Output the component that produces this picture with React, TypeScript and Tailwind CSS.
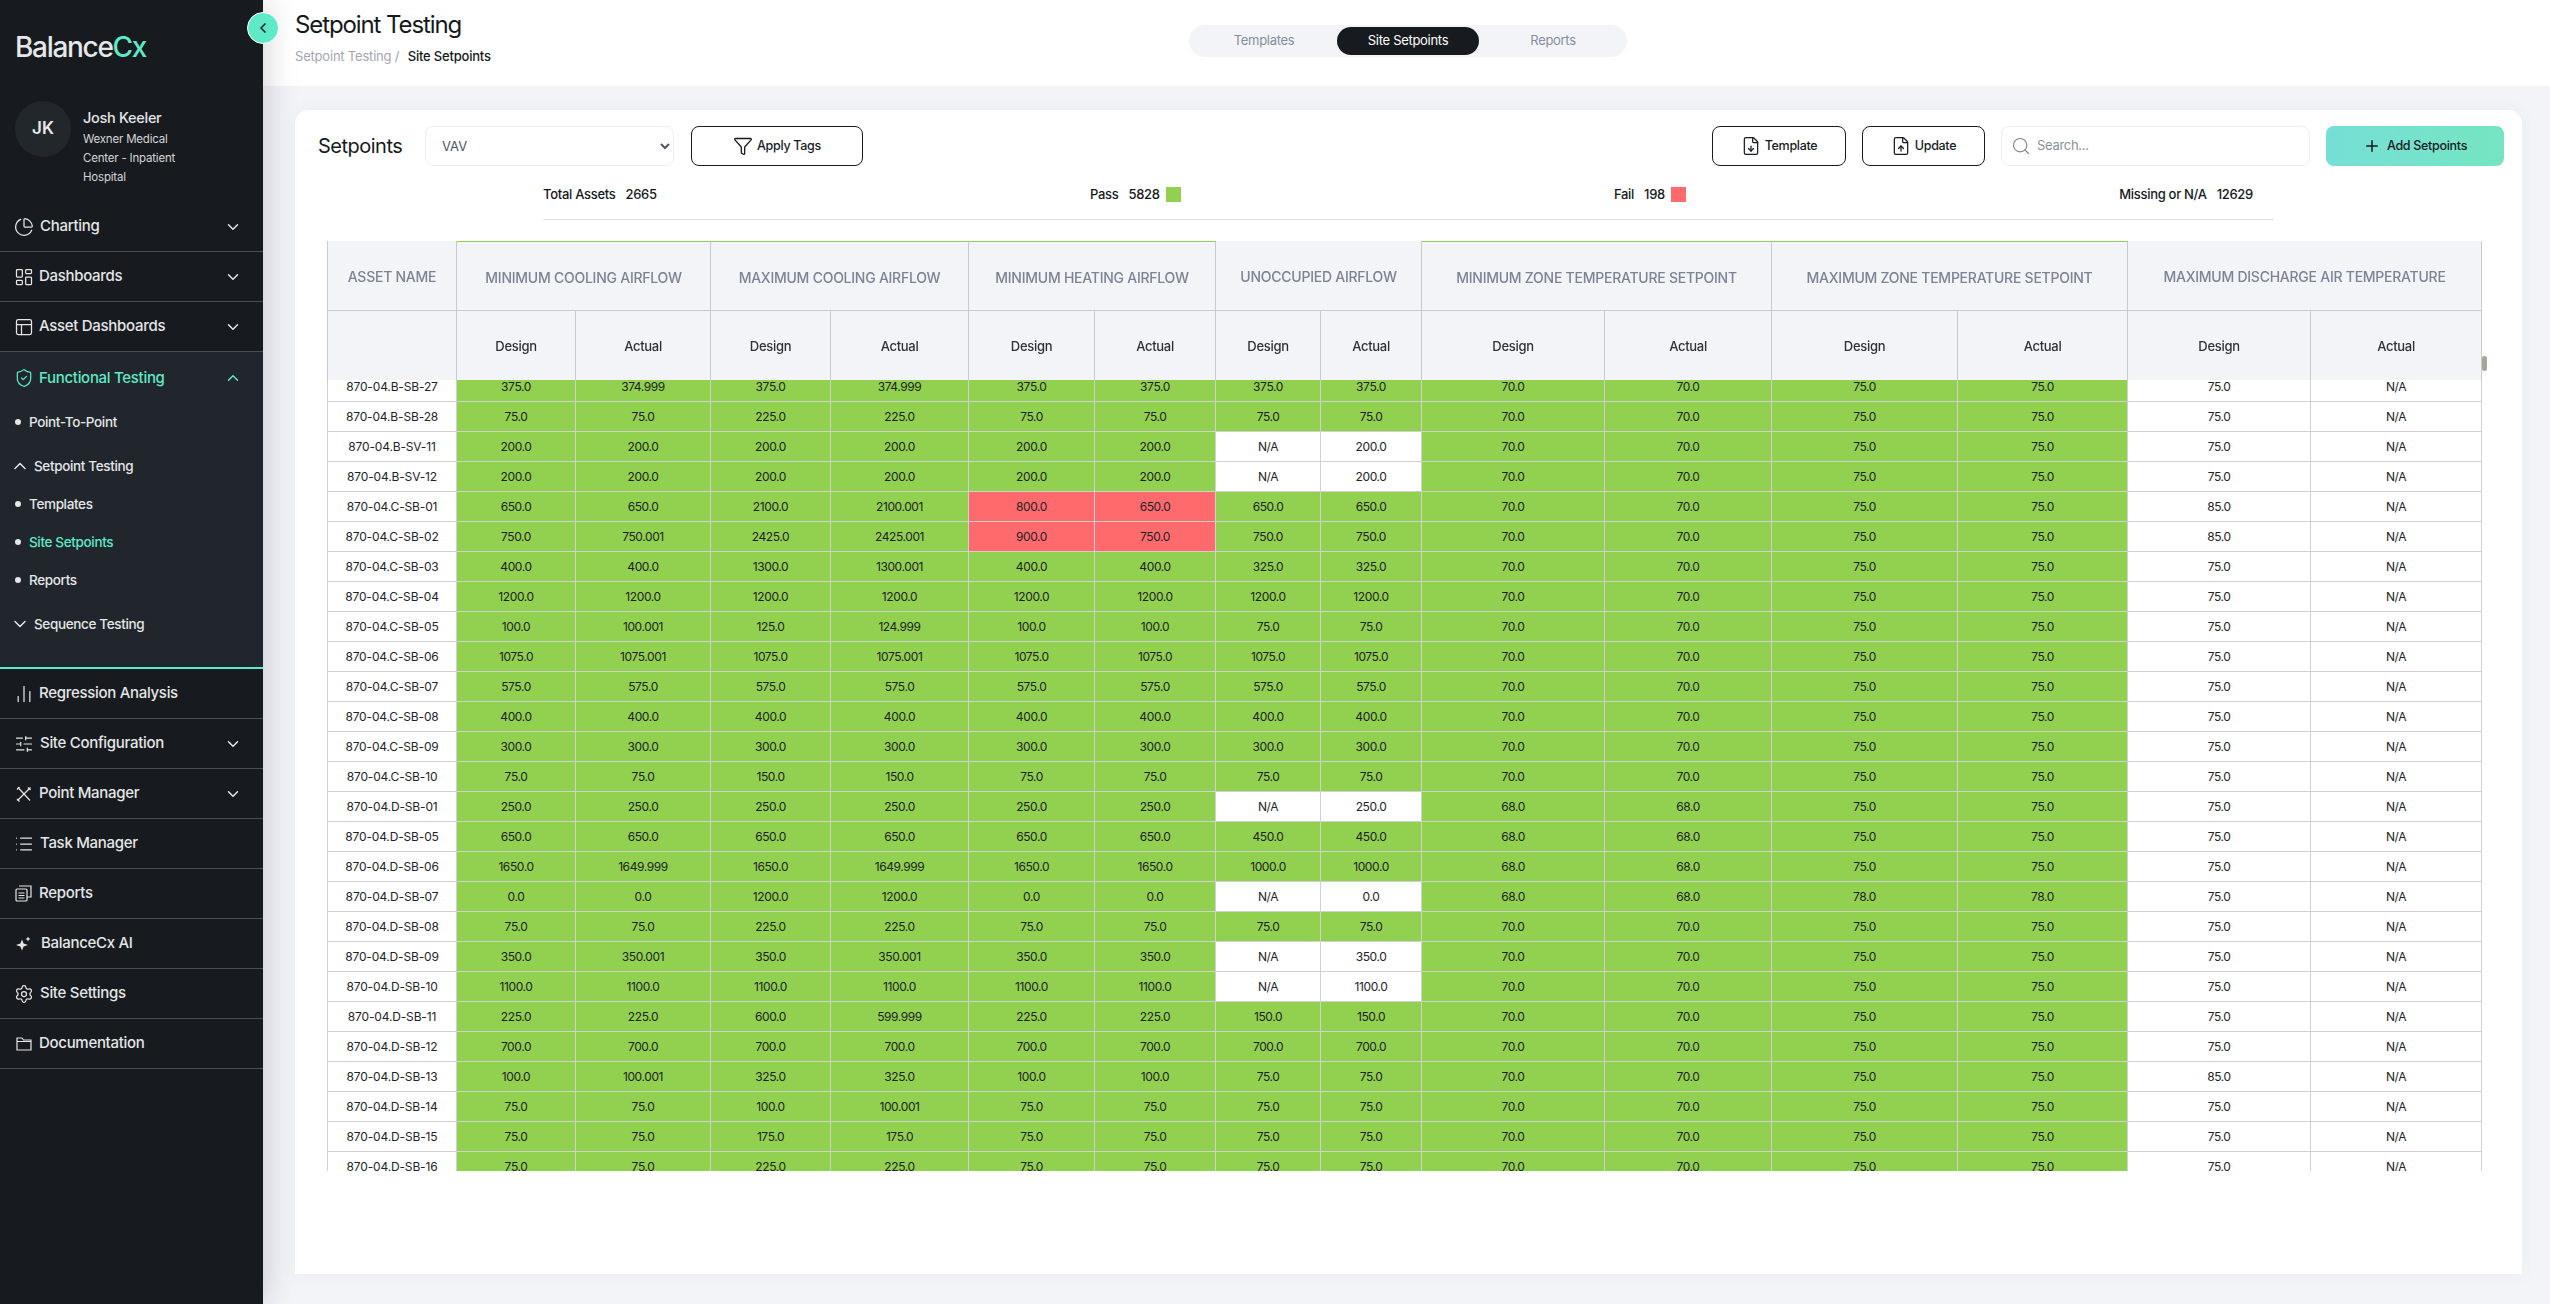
import { useLayoutEffect, useRef } from "react";
import type { ReactNode } from "react";
import {
  ChartNoAxesColumn,
  ChartPie,
  ChevronDown,
  ChevronLeft,
  ChevronUp,
  FileDown,
  FileUp,
  Funnel,
  LayoutDashboard,
  List,
  PanelsTopLeft,
  Plus,
  Search,
  Settings,
  ShieldCheck,
  SlidersHorizontal,
} from "lucide-react";

const ToolsIcon = () => (
  <svg width="16" height="16" viewBox="0 0 16 16" fill="none" stroke="currentColor" strokeWidth="1.2">
    <path d="M2 1.5 14 14.5M14.5 1.5 1.5 14.5" />
    <path d="M1 3.5 3.5 1M12 1.5l2.5 2.5M1 13l2.5 2.5" />
  </svg>
);

const ReportsIcon = () => (
  <svg width="17" height="17" viewBox="0 0 17 17" fill="none" stroke="currentColor" strokeWidth="1.2">
    <rect x="1" y="4" width="11" height="12" rx="1" />
    <path d="M4 1h12v11h-4M3.5 8h6M3.5 10.5h6M3.5 13h6" />
  </svg>
);

const SparkIcon = () => (
  <svg width="15" height="15" viewBox="0 0 15 15" fill="currentColor">
    <path d="M6 3.5 7.6 7.4 12 9 7.6 10.6 6 14.5 4.4 10.6 0 9l4.4-1.6Z" />
    <path d="M12 0.5 12.8 2.2 14.5 3 12.8 3.8 12 5.5 11.2 3.8 9.5 3 11.2 2.2Z" />
  </svg>
);

const FolderIcon = () => (
  <svg width="16" height="14" viewBox="0 0 16 14" fill="none" stroke="currentColor" strokeWidth="1.2">
    <path d="M1 1h5l1.5 2H15v10H1ZM1 4.5h14" />
  </svg>
);

const NavRow = ({ icon, label, gap, chevron }: { icon: ReactNode; label: string; gap: string; chevron?: boolean }) => (
  <div className={`flex h-[50px] items-center border-b border-[#4a4e52] pl-[15px] pr-[21px] text-[#e4e6e8] ${gap}`}>
    <span className="flex w-[17px] shrink-0 items-center justify-center [&>svg]:shrink-0">{icon}</span>
    <span className="flex-1 text-[15px] font-medium tracking-[-0.3px]">{label}</span>
    {chevron && <ChevronDown size={18} strokeWidth={2} />}
  </div>
);

const SubItem = ({ label, active, className }: { label: string; active?: boolean; className: string }) => (
  <div
    className={`flex items-center gap-[8px] pl-[15px] text-[13.5px] font-medium tracking-[-0.35px] ${className} ${
      active ? "text-[#5eeac6]" : "text-[#e4e6e8]"
    }`}
  >
    <span className="h-[6px] w-[6px] rounded-full bg-[#e4e6e8]" />
    {label}
  </div>
);

const Sidebar = () => (
  <aside className="relative z-10 flex h-full w-[263px] shrink-0 flex-col bg-[#171b1f] shadow-[0_0_32px_rgba(20,25,40,0.22)]">
    <div className="pl-[15px] pt-[28px] text-[28px] font-medium leading-[38px] tracking-[-1.3px] text-[#e6e7e8]">
      Balance<span className="text-[#5eeac6]">Cx</span>
    </div>
    <div className="mt-[35px] flex gap-[12px] pl-[15px]">
      <div className="flex h-[56px] w-[56px] shrink-0 items-center justify-center rounded-full bg-[#22272b] text-[17px] font-semibold text-[#e8e9ea]">
        JK
      </div>
      <div className="mt-[6px]">
        <div className="text-[14.5px] font-medium leading-[22px] tracking-[-0.3px] text-[#e4e6e8]">Josh Keeler</div>
        <div className="mt-[1px] w-[110px] text-[11.5px] leading-[19px] tracking-[-0.2px] text-[#d3d5d7]">
          Wexner Medical Center - Inpatient Hospital
        </div>
      </div>
    </div>
    <div className="mt-[15px]">
      <NavRow icon={<ChartPie size={20} strokeWidth={1.5} />} label="Charting" gap="gap-[8px]" chevron />
      <NavRow icon={<LayoutDashboard size={20} strokeWidth={1.5} />} label="Dashboards" gap="gap-[7px]" chevron />
      <NavRow icon={<PanelsTopLeft size={20} strokeWidth={1.5} />} label="Asset Dashboards" gap="gap-[7px]" chevron />
    </div>
    <div className="h-[317px] border-b-2 border-[#5eeac6] bg-[#20262b]">
      <div className="flex h-[52px] items-center gap-[7px] pl-[15px] pr-[21px] text-[#5eeac6]">
        <span className="flex w-[17px] shrink-0 items-center justify-center [&>svg]:shrink-0">
          <ShieldCheck size={20} strokeWidth={1.5} />
        </span>
        <span className="flex-1 text-[15px] font-medium tracking-[-0.3px]">Functional Testing</span>
        <ChevronUp size={18} strokeWidth={2} />
      </div>
      <SubItem label="Point-To-Point" className="mt-[8px] h-[20px]" />
      <div className="mt-[24px] flex h-[20px] items-center gap-[4px] pl-[15px] text-[13.5px] font-medium tracking-[-0.35px] text-[#e4e6e8]">
        <ChevronUp size={20} strokeWidth={1.8} className="-ml-[5px] shrink-0" />
        Setpoint Testing
      </div>
      <SubItem label="Templates" className="mt-[18px] h-[20px]" />
      <SubItem label="Site Setpoints" active className="mt-[18px] h-[20px]" />
      <SubItem label="Reports" className="mt-[18px] h-[20px]" />
      <div className="mt-[24px] flex h-[20px] items-center gap-[4px] pl-[15px] text-[13.5px] font-medium tracking-[-0.35px] text-[#e4e6e8]">
        <ChevronDown size={20} strokeWidth={1.8} className="-ml-[5px] shrink-0" />
        Sequence Testing
      </div>
    </div>
    <div>
      <NavRow icon={<ChartNoAxesColumn size={20} strokeWidth={1.5} />} label="Regression Analysis" gap="gap-[7px]" />
      <NavRow icon={<SlidersHorizontal size={20} strokeWidth={1.4} />} label="Site Configuration" gap="gap-[8px]" chevron />
      <NavRow icon={<ToolsIcon />} label="Point Manager" gap="gap-[7px]" chevron />
      <NavRow icon={<List size={20} strokeWidth={1.5} />} label="Task Manager" gap="gap-[8px]" />
      <NavRow icon={<ReportsIcon />} label="Reports" gap="gap-[7px]" />
      <NavRow icon={<SparkIcon />} label="BalanceCx AI" gap="gap-[9px]" />
      <NavRow icon={<Settings size={20} strokeWidth={1.5} />} label="Site Settings" gap="gap-[8px]" />
      <NavRow icon={<FolderIcon />} label="Documentation" gap="gap-[7px]" />
    </div>
    <button className="absolute left-[247px] top-[12px] flex h-[32px] w-[32px] items-center justify-center rounded-full border border-white bg-[#5eeac6] text-[#1b2226]">
      <ChevronLeft size={16} strokeWidth={2.5} />
    </button>
  </aside>
);

const TopBar = () => (
  <header className="flex h-[86px] shrink-0 bg-white pl-[32px]">
    <div className="w-[894px] shrink-0">
      <h1 className="mt-[9px] text-[24px] font-normal leading-[32px] tracking-[-1.1px] text-[#15191c]">Setpoint Testing</h1>
      <div className="mt-[5px] text-[13px] leading-[20px] tracking-[-0.2px] text-[#a3a6ae]">
        Setpoint Testing / <span className="ml-[5px] font-medium text-[#15191c]">Site Setpoints</span>
      </div>
    </div>
    <div className="mt-[25px] flex h-[32px] w-[438px] items-center rounded-full bg-[#f3f4f8] pl-[2px] text-[13px] tracking-[-0.3px] text-[#878d9f]">
      <span className="w-[146px] text-center">Templates</span>
      <span className="flex h-[28px] w-[142px] items-center justify-center rounded-full bg-[#171b1f] text-white">Site Setpoints</span>
      <span className="w-[148px] text-center">Reports</span>
    </div>
  </header>
);

const OutlineButton = ({ width, icon, label }: { width: string; icon: ReactNode; label: string }) => (
  <button className={`flex h-[40px] items-center justify-center gap-[4px] rounded-[8px] border border-[#171b1f] bg-white text-[12.5px] font-medium tracking-[-0.3px] text-[#171b1f] ${width}`}>
    {icon}
    {label}
  </button>
);

const Toolbar = () => (
  <div className="flex h-[40px] items-center pl-[23px] pr-[16px]">
    <span className="w-[107px] text-[20px] leading-none tracking-[-0.5px] text-[#15191c]">Setpoints</span>
    <select className="h-[40px] w-[249px] rounded-[8px] border border-[#eceef3] bg-white pl-[12px] pr-[4px] text-[13px] text-[#4f5663]">
      <option>VAV</option>
    </select>
    <div className="ml-[17px]">
      <OutlineButton width="w-[172px]" icon={<Funnel size={20} strokeWidth={1.6} />} label="Apply Tags" />
    </div>
    <div className="ml-[849px]">
      <OutlineButton width="w-[134px]" icon={<FileDown size={20} strokeWidth={1.5} />} label="Template" />
    </div>
    <div className="ml-[16px]">
      <OutlineButton width="w-[123px]" icon={<FileUp size={20} strokeWidth={1.5} />} label="Update" />
    </div>
    <label className="ml-[16px] flex h-[40px] w-[309px] items-center gap-[6px] rounded-[8px] border border-[#eceef3] pl-[9px] text-[#7b8494]">
      <Search size={20} strokeWidth={1.4} />
      <input placeholder="Search..." className="w-[240px] text-[13px] tracking-[-0.3px] outline-none placeholder:text-[#8a8f98]" />
    </label>
    <button className="ml-[16px] flex h-[40px] w-[178px] items-center justify-center gap-[6px] rounded-[8px] bg-gradient-to-r from-[#76dfd6] to-[#75e5c1] text-[12.5px] font-medium tracking-[-0.3px] text-[#171b1f]">
      <Plus size={18} strokeWidth={2} />
      Add Setpoints
    </button>
  </div>
);

const Stat = ({ label, value, swatch }: { label: string; value: string; swatch?: string }) => (
  <div className="flex items-center gap-[10px] text-[13px] font-medium tracking-[-0.3px] text-[#15191c]">
    <span>{label}</span>
    <span>{value}</span>
    {swatch && <span className={`-ml-[4px] h-[15px] w-[15px] ${swatch}`} />}
  </div>
);

const StatsRow = () => (
  <div className="ml-[248px] mr-[248px] mt-[15px] flex h-[39px] items-start justify-between border-b border-[#dfe0e2] pr-[21px] pt-[4px]">
    <Stat label="Total Assets" value="2665" />
    <Stat label="Pass" value="5828" swatch="bg-[#92d050]" />
    <Stat label="Fail" value="198" swatch="bg-[#ff6a6d]" />
    <Stat label="Missing or N/A" value="12629" />
  </div>
);

const colWidths = [130, 119, 135, 120, 138, 126, 121, 105, 101, 183, 167, 186, 170, 183, 171];

const groups = [
  { name: "MINIMUM COOLING AIRFLOW", green: true },
  { name: "MAXIMUM COOLING AIRFLOW", green: true },
  { name: "MINIMUM HEATING AIRFLOW", green: true },
  { name: "UNOCCUPIED AIRFLOW", green: false },
  { name: "MINIMUM ZONE TEMPERATURE SETPOINT", green: true },
  { name: "MAXIMUM ZONE TEMPERATURE SETPOINT", green: true },
  { name: "MAXIMUM DISCHARGE AIR TEMPERATURE", green: false },
];

type Row = { name: string; airflow: string[]; low?: string; high?: string; discharge?: string };

const rows: Row[] = [
  { name: "870-04.B-SB-27", airflow: ["375.0", "374.999", "375.0", "374.999", "375.0", "375.0", "375.0", "375.0"] },
  { name: "870-04.B-SB-28", airflow: ["75.0", "75.0", "225.0", "225.0", "75.0", "75.0", "75.0", "75.0"] },
  { name: "870-04.B-SV-11", airflow: ["200.0", "200.0", "200.0", "200.0", "200.0", "200.0", "N/A", "200.0"] },
  { name: "870-04.B-SV-12", airflow: ["200.0", "200.0", "200.0", "200.0", "200.0", "200.0", "N/A", "200.0"] },
  { name: "870-04.C-SB-01", airflow: ["650.0", "650.0", "2100.0", "2100.001", "800.0", "650.0", "650.0", "650.0"], discharge: "85.0" },
  { name: "870-04.C-SB-02", airflow: ["750.0", "750.001", "2425.0", "2425.001", "900.0", "750.0", "750.0", "750.0"], discharge: "85.0" },
  { name: "870-04.C-SB-03", airflow: ["400.0", "400.0", "1300.0", "1300.001", "400.0", "400.0", "325.0", "325.0"] },
  { name: "870-04.C-SB-04", airflow: ["1200.0", "1200.0", "1200.0", "1200.0", "1200.0", "1200.0", "1200.0", "1200.0"] },
  { name: "870-04.C-SB-05", airflow: ["100.0", "100.001", "125.0", "124.999", "100.0", "100.0", "75.0", "75.0"] },
  { name: "870-04.C-SB-06", airflow: ["1075.0", "1075.001", "1075.0", "1075.001", "1075.0", "1075.0", "1075.0", "1075.0"] },
  { name: "870-04.C-SB-07", airflow: ["575.0", "575.0", "575.0", "575.0", "575.0", "575.0", "575.0", "575.0"] },
  { name: "870-04.C-SB-08", airflow: ["400.0", "400.0", "400.0", "400.0", "400.0", "400.0", "400.0", "400.0"] },
  { name: "870-04.C-SB-09", airflow: ["300.0", "300.0", "300.0", "300.0", "300.0", "300.0", "300.0", "300.0"] },
  { name: "870-04.C-SB-10", airflow: ["75.0", "75.0", "150.0", "150.0", "75.0", "75.0", "75.0", "75.0"] },
  { name: "870-04.D-SB-01", airflow: ["250.0", "250.0", "250.0", "250.0", "250.0", "250.0", "N/A", "250.0"], low: "68.0" },
  { name: "870-04.D-SB-05", airflow: ["650.0", "650.0", "650.0", "650.0", "650.0", "650.0", "450.0", "450.0"], low: "68.0" },
  { name: "870-04.D-SB-06", airflow: ["1650.0", "1649.999", "1650.0", "1649.999", "1650.0", "1650.0", "1000.0", "1000.0"], low: "68.0" },
  { name: "870-04.D-SB-07", airflow: ["0.0", "0.0", "1200.0", "1200.0", "0.0", "0.0", "N/A", "0.0"], low: "68.0", high: "78.0" },
  { name: "870-04.D-SB-08", airflow: ["75.0", "75.0", "225.0", "225.0", "75.0", "75.0", "75.0", "75.0"] },
  { name: "870-04.D-SB-09", airflow: ["350.0", "350.001", "350.0", "350.001", "350.0", "350.0", "N/A", "350.0"] },
  { name: "870-04.D-SB-10", airflow: ["1100.0", "1100.0", "1100.0", "1100.0", "1100.0", "1100.0", "N/A", "1100.0"] },
  { name: "870-04.D-SB-11", airflow: ["225.0", "225.0", "600.0", "599.999", "225.0", "225.0", "150.0", "150.0"] },
  { name: "870-04.D-SB-12", airflow: ["700.0", "700.0", "700.0", "700.0", "700.0", "700.0", "700.0", "700.0"] },
  { name: "870-04.D-SB-13", airflow: ["100.0", "100.001", "325.0", "325.0", "100.0", "100.0", "75.0", "75.0"], discharge: "85.0" },
  { name: "870-04.D-SB-14", airflow: ["75.0", "75.0", "100.0", "100.001", "75.0", "75.0", "75.0", "75.0"] },
  { name: "870-04.D-SB-15", airflow: ["75.0", "75.0", "175.0", "175.0", "75.0", "75.0", "75.0", "75.0"] },
  { name: "870-04.D-SB-16", airflow: ["75.0", "75.0", "225.0", "225.0", "75.0", "75.0", "75.0", "75.0"] },
];

const cellFill = (row: Row, index: number) => {
  if (index === 4 || index === 5) {
    if (row.airflow[4] === "800.0" || row.airflow[4] === "900.0") return "bg-[#ff6a6d]";
  }
  if (index === 6 || index === 7) {
    if (row.airflow[6] === "N/A") return "bg-white";
  }
  if (index >= 12) return "bg-white";
  return "bg-[#92d050]";
};

const SetpointsTable = () => {
  const scroller = useRef<HTMLDivElement>(null);

  // the list is sitting a few pixels down from the top
  useLayoutEffect(() => {
    if (scroller.current) scroller.current.scrollTop = 8;
  }, []);

  return (
    <div className="relative ml-[32px] mt-[21px] w-[2155px]">
      <div ref={scroller} className="h-[930px] overflow-y-scroll [scrollbar-width:none]">
        <table className="w-[2155px] table-fixed border-separate border-spacing-0 text-center">
          <colgroup>
            {colWidths.map((w, i) => (
              <col key={i} style={{ width: w }} />
            ))}
          </colgroup>
          <thead className="sticky top-0 z-10 bg-[#f3f4f8]">
            <tr className="h-[70px] text-[14px] font-medium tracking-[-0.25px] text-[#7c8395]">
              <th className="border-b border-l border-r border-[#c9cacc] pt-[2px] font-medium">ASSET NAME</th>
              {groups.map((g) => (
                <th
                  key={g.name}
                  colSpan={2}
                  className={`border-b border-r border-b-[#c9cacc] border-r-[#c9cacc] pt-[2px] font-medium ${g.green ? "border-t border-t-[#92d050]" : ""}`}
                >
                  {g.name}
                </th>
              ))}
            </tr>
            <tr className="h-[69px] text-[13px] font-medium tracking-[-0.3px] text-[#2c3238]">
              <th className="border-l border-r border-[#c9cacc]" />
              {groups.flatMap((g) => [
                <th key={g.name + "d"} className="border-r border-[#c9cacc] pt-[2px] font-medium">Design</th>,
                <th key={g.name + "a"} className="border-r border-[#c9cacc] pt-[2px] font-medium">Actual</th>,
              ])}
            </tr>
          </thead>
          <tbody className="text-[12px] tracking-[-0.4px] text-[#1d2327]">
            {rows.map((row) => {
              const values = [
                ...row.airflow,
                row.low ?? "70.0",
                row.low ?? "70.0",
                row.high ?? "75.0",
                row.high ?? "75.0",
                row.discharge ?? "75.0",
                "N/A",
              ];
              return (
                <tr key={row.name} className="h-[30px]">
                  <td className="border-b border-l border-r border-[#cfd0d0] bg-white tracking-[-0.15px]">{row.name}</td>
                  {values.map((v, i) => (
                    <td key={i} className={`border-b border-r border-[#cfd0d0] ${cellFill(row, i)}`}>
                      {v}
                    </td>
                  ))}
                </tr>
              );
            })}
          </tbody>
        </table>
      </div>
      <div className="absolute -right-[5px] top-[115px] h-[15px] w-[5px] rounded-full bg-[#a8a49c]" />
    </div>
  );
};

export default function App() {
  return (
    <div className="flex h-[1304px] w-[2550px] overflow-hidden bg-[#f3f4f8] font-['Inter',sans-serif]">
      <Sidebar />
      <main className="flex min-w-0 flex-1 flex-col">
        <TopBar />
        <section className="ml-[32px] mt-[24px] h-[1164px] w-[2227px] rounded-t-[14px] bg-white pt-[16px] shadow-[0_0_20px_rgba(60,70,100,0.05)]">
          <Toolbar />
          <StatsRow />
          <SetpointsTable />
        </section>
      </main>
    </div>
  );
}
